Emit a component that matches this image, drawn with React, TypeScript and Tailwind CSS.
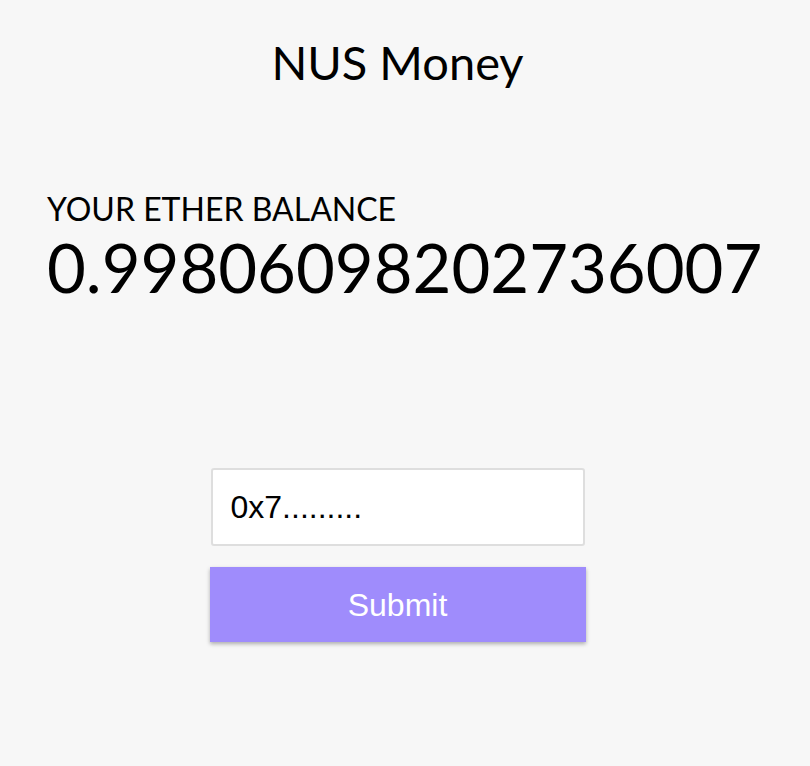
export default function App() {
  return (
    <div className="min-h-[766px] w-full bg-[#f7f7f7] font-['Lato',sans-serif] text-black">
      <div className="w-[795px]">
        <header className="pt-[30px] text-center">
          <h1 className="text-[47px] leading-[64px]">NUS Money</h1>
        </header>

        <section className="mt-[100px] px-[47px]">
          <div className="text-[32px] leading-[30px]">YOUR ETHER BALANCE</div>
          <div className="mt-[3px] text-[67px] leading-[80px]">0.99806098202736007</div>
        </section>

        <form className="mx-auto mt-[161px] flex w-[376px] flex-col gap-[21px]">
          <input
            className="mx-[1px] h-[78px] rounded-[3px] border-2 border-[#dedede] bg-white px-[18px] font-['Liberation_Sans',Arial,sans-serif] text-[32px] text-black outline-none"
            defaultValue="0x7........."
          />
          <button
            type="button"
            className="h-[75px] bg-[#9f8cfc] font-['Liberation_Sans',Arial,sans-serif] text-[32px] text-white shadow-[0_2px_4px_rgba(0,0,0,0.3)]"
          >
            Submit
          </button>
        </form>
      </div>
    </div>
  );
}
